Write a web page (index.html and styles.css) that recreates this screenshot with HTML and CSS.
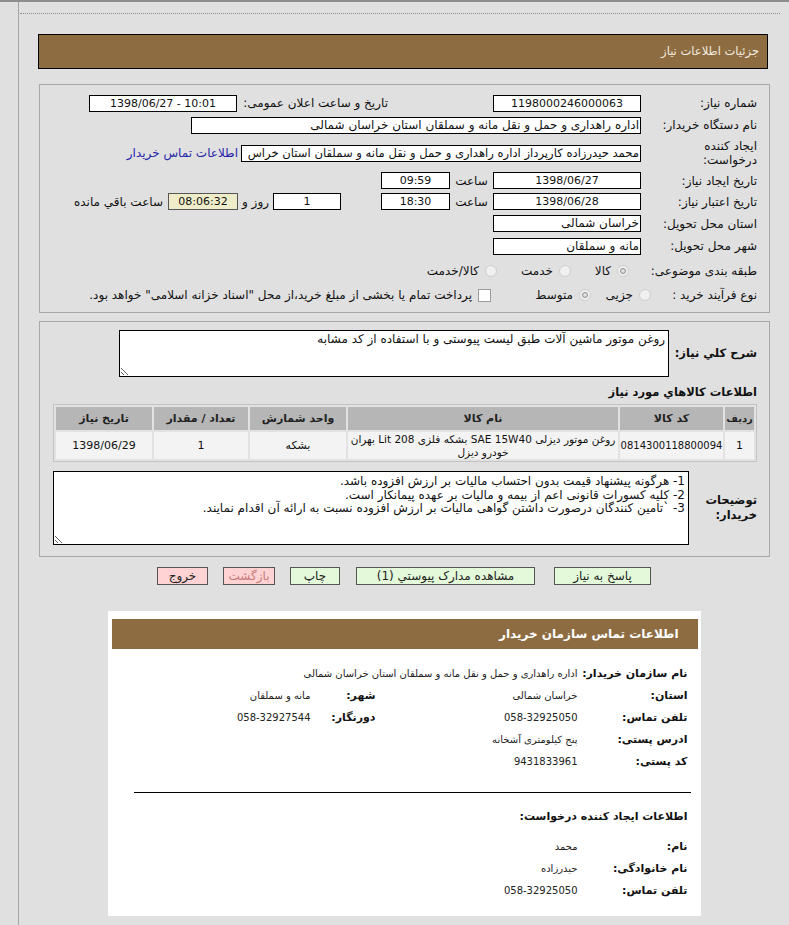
FILE: index.html
```html
<!DOCTYPE html>
<html lang="fa" dir="rtl">
<head>
<meta charset="utf-8">
<title>جزئیات اطلاعات نیاز</title>
<link rel="stylesheet" href="styles.css">
</head>
<body>
<div class="wrap">
  <div class="dots"></div>
  <div class="titlebar">جزئیات اطلاعات نیاز</div>

  <div class="panel p1">
    <div class="row h22">
      <div class="lbl">شماره نیاز:</div>
      <div class="inp w148">1198000246000063</div>
      <div class="lbl2">تاریخ و ساعت اعلان عمومی:</div>
      <div class="inp w148" dir="ltr">1398/06/27 - 10:01</div>
    </div>
    <div class="row h22">
      <div class="lbl">نام دستگاه خریدار:</div>
      <div class="inp w450 al">اداره راهداری و حمل و نقل مانه و سملقان استان خراسان شمالی</div>
    </div>
    <div class="row h34">
      <div class="lbl two">ایجاد کننده<br>درخواست:</div>
      <div class="inp w400 al fit">محمد حیدرزاده کارپرداز اداره راهداری و حمل و نقل مانه و سملقان استان خراس</div>
      <a class="link" href="#">اطلاعات تماس خریدار</a>
    </div>
    <div class="row h21">
      <div class="lbl">تاریخ ایجاد نیاز:</div>
      <div class="inp w148">1398/06/27</div>
      <div class="sa">ساعت</div>
      <div class="inp w69">09:59</div>
    </div>
    <div class="row h21">
      <div class="lbl">تاریخ اعتبار نیاز:</div>
      <div class="inp w148">1398/06/28</div>
      <div class="sa">ساعت</div>
      <div class="inp w69">18:30</div>
      <div class="inp w68 gap40">1</div>
      <div class="ruz">روز و</div>
      <div class="remain">08:06:32</div>
      <div class="rest">ساعت باقي مانده</div>
    </div>
    <div class="row h23">
      <div class="lbl">استان محل تحویل:</div>
      <div class="inp w148 al">خراسان شمالی</div>
    </div>
    <div class="row h22">
      <div class="lbl">شهر محل تحویل:</div>
      <div class="inp w148 al">مانه و سملقان</div>
    </div>
    <div class="row h27">
      <div class="lbl">طبقه بندی موضوعی:</div>
      <div class="opt o58 first"><span class="rd on"></span>کالا</div>
      <div class="opt o74"><span class="rd"></span>خدمت</div>
      <div class="opt"><span class="rd"></span>کالا/خدمت</div>
    </div>
    <div class="row h22">
      <div class="lbl l106">نوع فرآیند خرید :</div>
      <div class="opt o60"><span class="rd"></span>جزیی</div>
      <div class="opt o100"><span class="rd on"></span>متوسط</div>
      <div class="opt"><span class="chk"></span>پرداخت تمام یا بخشی از مبلغ خرید،از محل "اسناد خزانه اسلامی" خواهد بود.</div>
    </div>
  </div>

  <div class="panel p2">
    <div class="row">
      <div class="blbl w88">شرح کلي نیاز:</div>
      <textarea class="ta ta1" readonly>روغن موتور ماشین آلات طبق لیست پیوستی و با استفاده از کد مشابه</textarea>
    </div>
    <div class="sec-h">اطلاعات کالاهاي مورد نیاز</div>
    <table class="items">
      <thead>
        <tr>
          <th class="c1">ردیف</th>
          <th class="c2">کد کالا</th>
          <th class="c3">نام کالا</th>
          <th class="c4">واحد شمارش</th>
          <th class="c5">تعداد / مقدار</th>
          <th class="c6">تاریخ نیاز</th>
        </tr>
      </thead>
      <tbody>
        <tr>
          <td>1</td>
          <td class="code">0814300118800094</td>
          <td class="nm"><span class="nw">روغن موتور دیزلی SAE 15W40 بشکه فلزی 208 Lit بهران</span><br>خودرو دیزل</td>
          <td>بشکه</td>
          <td>1</td>
          <td>1398/06/29</td>
        </tr>
      </tbody>
    </table>
    <div class="row exp">
      <div class="blbl w68">توضیحات<br>خریدار:</div>
      <textarea class="ta ta2" readonly>1- هرگونه پیشنهاد قیمت بدون احتساب مالیات بر ارزش افزوده باشد.
2- کلیه کسورات قانونی اعم از بیمه و مالیات بر عهده پیمانکار است.
3- `تامین کنندگان درصورت داشتن گواهی مالیات بر ارزش افزوده نسبت به ارائه آن اقدام نمایند.</textarea>
    </div>
  </div>

  <div class="btns">
    <button class="btn green b97">پاسخ به نیاز</button>
    <button class="btn green b179">مشاهده مدارک پیوستي (1)</button>
    <button class="btn green b50">چاپ</button>
    <button class="btn pink b52 faded">بازگشت</button>
    <button class="btn pink b51">خروج</button>
  </div>

  <div class="card">
    <div class="card-h">اطلاعات تماس سازمان خریدار</div>
    <div class="cbody">
      <div class="crow first">
        <div class="cl">نام سازمان خریدار:</div>
        <div class="cv wide">اداره راهداری و حمل و نقل مانه و سملقان استان خراسان شمالی</div>
      </div>
      <div class="crow">
        <div class="cl">استان:</div>
        <div class="cv">خراسان شمالی</div>
        <div class="cl2">شهر:</div>
        <div class="cv2">مانه و سملقان</div>
      </div>
      <div class="crow">
        <div class="cl">تلفن تماس:</div>
        <div class="cv">058-32925050</div>
        <div class="cl2">دورنگار:</div>
        <div class="cv2">058-32927544</div>
      </div>
      <div class="crow">
        <div class="cl">ادرس پستی:</div>
        <div class="cv">پنج کیلومتری آشخانه</div>
      </div>
      <div class="crow">
        <div class="cl">کد پستی:</div>
        <div class="cv">9431833961</div>
      </div>
      <div class="line"></div>
      <div class="csub">اطلاعات ایجاد کننده درخواست:</div>
      <div class="crow first2">
        <div class="cl">نام:</div>
        <div class="cv">محمد</div>
      </div>
      <div class="crow">
        <div class="cl">نام خانوادگی:</div>
        <div class="cv">حیدرزاده</div>
      </div>
      <div class="crow">
        <div class="cl">تلفن تماس:</div>
        <div class="cv">058-32925050</div>
      </div>
    </div>
  </div>
</div>
</body>
</html>
```

FILE: styles.css
```css
html {
  overflow: hidden;
}
body {
  margin: 0;
  background: #e0e0e0;
  border-top: 2px solid #8d8d8d;
  font-family: "DejaVu Sans", sans-serif;
  font-size: 12px;
  color: #111;
}
.wrap {
  margin-left: 18px;
  border-left: 1px solid #a6a6a6;
  min-height: 923px;
  padding-top: 11px;
  box-sizing: border-box;
}
.dots {
  border-top: 1px dotted #8a8a8a;
  margin: 0 9px 0 1px;
}
.titlebar {
  margin: 20px 21px 0 19px;
  height: 33px;
  border: 1px solid #000;
  background: #8e6c42;
  color: #f3ece0;
  line-height: 33px;
  padding-right: 8px;
  font-size: 11.5px;
}
.panel {
  border: 1px solid #a7a7a7;
  margin-left: 20px;
  margin-right: 19px;
  box-sizing: border-box;
}
.p1 {
  margin-top: 15px;
  padding: 7px 12px 0 0;
  height: 229px;
}
.row {
  display: flex;
  align-items: center;
}
.h21 { height: 21px; }
.h22 { height: 22px; }
.h23 { height: 23px; }
.h27 { height: 27px; }
.h34 { height: 34px; }

.lbl {
  width: 116px;
  flex: none;
  white-space: nowrap;
}
.lbl.two {
  line-height: 14px;
}
.l106 { width: 106px; }
.lbl2 {
  width: 151px;
  margin-right: 105px;
  flex: none;
  white-space: nowrap;
}
.inp {
  box-sizing: border-box;
  height: 17px;
  border: 1px solid #000;
  background: #fff;
  font-size: 11px;
  line-height: 15px;
  text-align: center;
  white-space: nowrap;
  overflow: hidden;
  padding: 0 3px;
  flex: none;
}
.al {
  text-align: right;
  padding-right: 1px;
  font-size: 12px;
}
.al.fit {
  font-size: 11.6px;
  padding-left: 0;
}
.w148 { width: 148px; }
.w450 { width: 450px; }
.w400 { width: 400px; }
.w69 { width: 69px; }
.w68 { width: 68px; }
.gap40 { margin-right: 40px; }
.link {
  color: #2525a8;
  text-decoration: none;
  margin-right: 3px;
  white-space: nowrap;
}
.sa {
  width: 43px;
  text-align: center;
  flex: none;
}
.ruz {
  width: 35px;
  text-align: center;
  flex: none;
}
.remain {
  box-sizing: border-box;
  width: 70px;
  height: 17px;
  line-height: 15px;
  font-size: 11px;
  background: #efedc9;
  border: 1px solid #555;
  text-align: center;
  flex: none;
}
.rest {
  margin-right: 5px;
  white-space: nowrap;
}

.opt {
  display: flex;
  align-items: center;
  flex: none;
  white-space: nowrap;
}
.opt.first { margin-right: 12px; }
.o58 { width: 58px; }
.o74 { width: 74px; }
.o60 { width: 60px; }
.o100 { width: 100px; }
.rd {
  width: 12px;
  height: 12px;
  border-radius: 50%;
  border: 1px solid #cdcdcd;
  background: #f0f0f0;
  box-sizing: border-box;
  margin-left: 6px;
  display: flex;
  align-items: center;
  justify-content: center;
  flex: none;
}
.rd.on::after {
  content: "";
  width: 6px;
  height: 6px;
  border-radius: 50%;
  border: 1px solid #8a8a8a;
  box-sizing: border-box;
  background: #e2e2e2;
}
.chk {
  width: 13px;
  height: 13px;
  border: 1px solid #9c9c9c;
  background: #fff;
  box-sizing: border-box;
  margin-left: 6px;
  flex: none;
}

.p2 {
  margin-top: 8px;
  padding: 8px 12px 11px 13px;
}
.blbl {
  font-weight: bold;
  font-size: 11.5px;
  flex: none;
  line-height: 15px;
}
.w88 { width: 88px; }
.w68 { width: 68px; }
.ta {
  box-sizing: border-box;
  border: 1px solid #000;
  background: #fff;
  font-family: "DejaVu Sans", sans-serif;
  font-size: 12px;
  color: #111;
  padding: 1px 3px;
  margin: 0;
  display: block;
  resize: both;
  overflow: hidden;
}
.ta1 {
  width: 550px;
  height: 47px;
}
.ta2 {
  width: 636px;
  height: 74px;
  line-height: 13.5px;
  padding-top: 3px;
}
.sec-h {
  font-weight: bold;
  font-size: 11.5px;
  margin-top: 6px;
  height: 18px;
  line-height: 18px;
}
.items {
  margin-top: 3px;
  width: 704px;
  border-collapse: separate;
  border-spacing: 2px;
  border: 1px solid #c3c3c3;
  background: #e2e2e2;
  table-layout: fixed;
}
.items th {
  background: #b6b6b6;
  font-weight: bold;
  color: #222;
  font-size: 11px;
  height: 23px;
  padding: 0;
  white-space: nowrap;
}
.items th.c1 {
  font-size: 10px;
}
.items td {
  background: #f3f3f3;
  text-align: center;
  font-size: 11px;
  line-height: 13px;
  height: 27px;
  padding: 0 1px;
}
.items td.code {
  font-size: 10px;
  padding: 0;
}
.items td.nm {
  font-size: 10.5px;
  line-height: 13px;
  overflow: hidden;
}
.nw {
  white-space: nowrap;
}
.c1 { width: 29px; }
.c2 { width: 103px; }
.c3 { width: 270px; }
.c4 { width: 96px; }
.c5 { width: 94px; }
.c6 { width: 96px; }
.exp {
  margin-top: 9px;
}

.btns {
  display: flex;
  justify-content: center;
  margin-top: 10px;
}
.btn {
  box-sizing: border-box;
  height: 18px;
  border: 1px solid #555;
  font-family: "DejaVu Sans", sans-serif;
  font-size: 12px;
  line-height: 15px;
  padding: 0;
  color: #222;
  flex: none;
}
.btn + .btn { margin-right: 15px; }
.btn.b179 { margin-right: 19px; }
.btn.b50 { margin-right: 16px; }
.green { background: #e3f9d9; }
.pink { background: #ffd3d3; }
.faded { color: #c97b7b; }
.b97 { width: 97px; }
.b179 { width: 179px; }
.b50 { width: 50px; }
.b52 { width: 52px; }
.b51 { width: 51px; }

.card {
  width: 593px;
  box-sizing: border-box;
  margin: 26px auto 0;
  background: #fff;
  padding: 8px 3px 15px 4px;
}
.card-h {
  height: 30px;
  background: #8e6c42;
  color: #fff;
  font-weight: bold;
  font-size: 12px;
  line-height: 30px;
  padding-right: 19px;
}
.cbody {
  padding-right: 10px;
}
.crow {
  display: flex;
  align-items: center;
  height: 22px;
}
.crow.first { margin-top: 13px; }
.crow.first2 { margin-top: 8px; }
.cl {
  width: 110px;
  flex: none;
  font-weight: bold;
  font-size: 11px;
  color: #111;
  white-space: nowrap;
}
.cv {
  width: 202px;
  flex: none;
  font-size: 10px;
  color: #222;
  white-space: nowrap;
}
.cv.wide { width: auto; }
.cl2 {
  width: 65px;
  flex: none;
  font-weight: bold;
  font-size: 11px;
  white-space: nowrap;
}
.cv2 {
  font-size: 10px;
  color: #222;
  white-space: nowrap;
}
.line {
  height: 1px;
  background: #000;
  margin: 20px -3px 0 22px;
}
.csub {
  font-weight: bold;
  font-size: 11px;
  margin-top: 14px;
  height: 20px;
  line-height: 20px;
}
```
